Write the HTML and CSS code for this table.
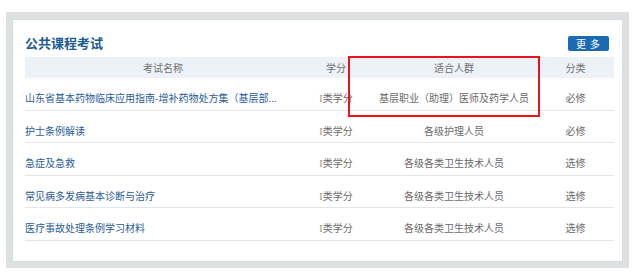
FILE: index.html
```html
<!DOCTYPE html>
<html lang="zh-CN">
<head>
<meta charset="utf-8">
<title>公共课程考试</title>
<link rel="stylesheet" href="styles.css">
</head>
<body>
<div class="frame">
  <div class="panel">
    <div class="head">
      <h2 class="title">公共课程考试</h2>
      <a class="more" href="#">更 多</a>
    </div>
    <div class="grid">
      <div class="row thead">
        <div class="c1 center">考试名称</div>
        <div class="c2">学分</div>
        <div class="c3">适合人群</div>
        <div class="c4">分类</div>
      </div>
      <div class="row">
        <div class="c1"><a href="#">山东省基本药物临床应用指南-增补药物处方集（基层部...</a></div>
        <div class="c2"><span class="num">I</span>类学分</div>
        <div class="c3">基层职业（助理）医师及药学人员</div>
        <div class="c4">必修</div>
      </div>
      <div class="row">
        <div class="c1"><a href="#">护士条例解读</a></div>
        <div class="c2"><span class="num">I</span>类学分</div>
        <div class="c3">各级护理人员</div>
        <div class="c4">必修</div>
      </div>
      <div class="row">
        <div class="c1"><a href="#">急症及急救</a></div>
        <div class="c2"><span class="num">I</span>类学分</div>
        <div class="c3">各级各类卫生技术人员</div>
        <div class="c4">选修</div>
      </div>
      <div class="row">
        <div class="c1"><a href="#">常见病多发病基本诊断与治疗</a></div>
        <div class="c2"><span class="num">I</span>类学分</div>
        <div class="c3">各级各类卫生技术人员</div>
        <div class="c4">选修</div>
      </div>
      <div class="row">
        <div class="c1"><a href="#">医疗事故处理条例学习材料</a></div>
        <div class="c2"><span class="num">I</span>类学分</div>
        <div class="c3">各级各类卫生技术人员</div>
        <div class="c4">选修</div>
      </div>
    </div>
  </div>
</div>
<div class="highlight"></div>
</body>
</html>
```
FILE: styles.css
```css
html, body {
  margin: 0;
  padding: 0;
  background: #ffffff;
}
body {
  font-family: "Noto Sans CJK SC", "Noto Sans", sans-serif;
  font-size: 10px;
  color: #6a6a6a;
  position: relative;
  width: 637px;
  height: 274px;
  overflow: hidden;
}
.frame {
  margin: 12px 0 0 6px;
  width: 623px;
  height: 256px;
  box-sizing: border-box;
  background: #dedfdf;
  padding: 7px 6px 6px 6px;
}
.panel {
  height: 100%;
  box-sizing: border-box;
  background: #ffffff;
  border: 1px solid #cfdde4;
  padding: 16px 8px 0 12px;
}
.head {
  display: flex;
  justify-content: space-between;
  align-items: flex-start;
  height: 15px;
  margin-bottom: 6px;
}
.title {
  margin: 0;
  font-size: 13px;
  line-height: 14px;
  font-weight: bold;
  color: #1c5b97;
}
.more {
  display: block;
  width: 41px;
  height: 15px;
  line-height: 15px;
  margin-right: 5px;
  background: #1b6bb4;
  border-radius: 2px;
  color: #ffffff;
  font-size: 10px;
  text-align: center;
  text-decoration: none;
  letter-spacing: 1px;
}
.grid {
  width: 589px;
}
.row {
  display: grid;
  grid-template-columns: 276px 70px 166px 77px;
  height: 32.5px;
  box-sizing: border-box;
  border-bottom: 1px solid #dfe7ec;
  padding-top: 13px;
  line-height: 14px;
  white-space: nowrap;
}
.row.thead {
  height: 21px;
  padding-top: 4px;
  background: #edf2f8;
  border-bottom: none;
  color: #707070;
}
.c1 {
  text-align: left;
}
.c1.center {
  text-align: center;
}
.c2, .c3, .c4 {
  text-align: center;
}
.c1 a {
  color: #2b5c99;
  text-decoration: none;
}
.num {
  font-family: "Liberation Serif", serif;
  color: #a98f68;
}
.highlight {
  position: absolute;
  left: 348px;
  top: 56px;
  width: 192px;
  height: 61px;
  box-sizing: border-box;
  border: 2px solid #e8141b;
}
```
